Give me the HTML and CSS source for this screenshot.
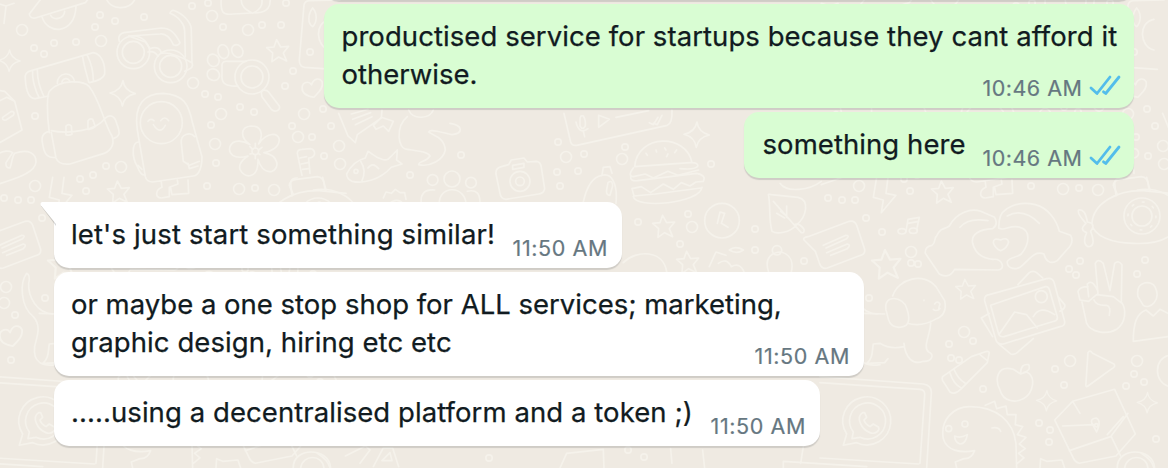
FILE: index.html
```
<!DOCTYPE html>
<html lang="en">
<head>
  <meta charset="UTF-8">
  <meta name="viewport" content="width=device-width,initial-scale=1.0">
  <title>Chat</title>
  <link rel="stylesheet" href="styles.css">
</head>
<body>
  <svg class="wallpaper" width="1168" height="468" viewBox="0 0 1168 468" aria-hidden="true">
    <defs>
      <path id="star" d="M-4-32 8-10 32-12 16 8 26 32 2 20-18 34-16 8-34-8-12-10z"/>
      <path id="spark" d="M1-38Q5-8 38 1 5 8-1 38-5 8-38-1-5-8 1-38z"/>
      <path id="heart" d="M0 28C-20 22-34 10-31-6-28-22-8-24-2-10 8-30 26-28 31-14 33 6 12 18 0 28z"/>
      <path id="dots-l" d="M22 30h.1M101 41h.1M212 16h.1M248 30h.1M221 114h.1M215 144h.1M304 114h.1M298 137h.1M239 189h.1M274 190h.1M121 167h.1M35 186h.1M339 146h.1M340 164h.1M566 157h.1M622 159h.1M692 227h.1M6 287h.1M4 303h.1M140 332h.1M87 252h.1M313 361h.1M246 361h.1M193 83h.1"/>
      <path id="dots-s" d="M34 48h.1M54 43h.1M76 42h.1M44 54h.1M95 27h.1M100 15h.1M115 21h.1M144 17h.1M192 6h.1M208 3h.1M286 3h.1M223 27h.1M262 25h.1M281 25h.1M205 94h.1M218 97h.1M240 107h.1M254 112h.1M285 86h.1M293 71h.1M310 52h.1M323 109h.1M35 116h.1M211 125h.1M216 163h.1M207 186h.1M106 166h.1M93 175h.1M80 179h.1M86 191h.1M255 188h.1M292 126h.1M312 137h.1M324 156h.1M331 126h.1M410 175h.1M461 155h.1M558 142h.1M584 154h.1M557 172h.1M578 171h.1M560 186h.1M625 147h.1M711 164h.1M638 222h.1M688 214h.1M680 244h.1M31 200h.1M18 200h.1M4 198h.1M42 218h.1M58 232h.1M87 263h.1M94 264h.1M755 229h.1M755 250h.1M804 261h.1M45 298h.1M15 315h.1M11 360h.1M135 360h.1M149 341h.1M125 344h.1M127 358h.1M245 269h.1M256 261h.1M252 275h.1M321 260h.1M313 274h.1M231 369h.1M240 385h.1M302 386h.1M310 374h.1M320 382h.1M215 423h.1M226 430h.1M225 442h.1M332 439h.1M489 458h.1M628 450h.1M644 457h.1M159 389h.1"/>
      <g id="wa">
        <path d="M-66 36A72 72 0 1 1-36 62L-76 70z"/>
        <path d="M-46 30A54 54 0 1 1-26 46L-50 50z"/>
        <path d="M-18-28C-40-14-22 22 4 32 20 38 34 26 30 16L14 6 4 14C-6 8-12 2-14-6L-6-14-12-28z"/>
      </g>
      <g id="tile">
        <!-- top left -->
        <g transform="scale(.3333)">
          <path d="M128-10 88 42Q90 56 106 54L256 8 270-10M126 50C140 104 226 106 228 18M152 46C158 62 192 58 194 34M318-6C330 30 388 34 406-4M-8 10 18 18 42 10M18 18 12 70"/>
          <use href="#spark" transform="translate(28 182) scale(.85)"/>
          <use href="#spark" x="368" y="280"/>
          <path d="M76 238Q72 216 94 212L280 158C304 162 316 190 314 222Q310 240 268 248M76 238C78 270 84 296 106 296L146 288M98 214C96 240 108 276 118 294M112 210C112 240 122 270 132 290M248 170C252 200 262 228 266 246M262 166C274 190 280 222 280 242M172 250A26 26 0 1 1 224 246M186 250A12 12 0 1 1 210 246"/>
          <path d="M148 398C140 340 140 280 150 272 180 238 250 240 268 260 300 300 312 370 336 408 346 436 330 458 300 464L210 492Q176 496 168 474L154 398M154 392C210 404 290 390 314 356M314 356C330 342 344 346 350 370 364 404 356 410 340 416M148 394C120 400 124 420 132 450 138 470 152 474 166 472M198 378v26q10 4 18-2l-2-24q-8-8-16 0zM264 362v26q10 2 22-8l-8-22q-8-4-14 4z"/>
          <path d="M-10 270 14 274 44 304 66 390-8 432M-8 306 20 292 44 304M8 352 34 334Q46 334 40 346L18 360Q6 362 8 352M-10 464C12 450 30 452 38 458L18 488Q16 504 30 504C36 490 36 468 44 460 84 446 108 458 108 486 106 520 42 536-8 554"/>
          <circle cx="400" cy="157" r="49"/><circle cx="400" cy="157" r="33"/>
          <circle cx="512" cy="199" r="49"/><circle cx="512" cy="199" r="33"/>
          <path d="M358 124C352 106 364 100 372 98L484 84C512 84 526 100 540 128Q534 140 520 134C510 112 496 100 480 102L386 108 436 126 450 146C470 138 482 146 484 160 510 154 550 174 576 188 582 202 572 206 554 214M444 156C462 152 468 160 474 168M510 40Q514 28 524 32C560 46 576 76 574 92L576 190M510 40C540 52 554 76 554 92L556 170"/>
          <path d="M436 530 412 390C400 310 436 280 490 280 550 284 566 310 578 370L606 470C606 500 598 526 580 528L458 546Q440 546 436 530zM416 426C396 424 394 470 412 500 420 520 428 526 434 524M544 430C540 400 572 396 584 410M544 430 550 484 568 496 598 484 M564 490 568 506 594 498M444 364Q452 354 462 362M482 362Q494 346 506 362M460 374Q480 406 496 376M484 546 486 562C466 570 464 594 484 594L508 590 508 562 534 552 532 540M512 564 516 584 566 580 564 540M414 496l12 12"/>
          <circle cx="484" cy="368" r="63"/>
          <circle cx="756" cy="231" r="51"/><circle cx="756" cy="231" r="33"/>
          <path d="M784 278C784 268 800 268 806 276L838 318C842 332 824 338 814 328L786 290zM714 258C680 260 664 252 666 226L666 196Q666 182 684 184L738 184"/>
          <ellipse cx="670" cy="155" rx="16" ry="21" transform="rotate(-15 670 155)"/><ellipse cx="712" cy="153" rx="16" ry="20" transform="rotate(-30 712 153)"/><ellipse cx="640" cy="181" rx="17" ry="19" transform="rotate(-30 640 181)"/><ellipse cx="640" cy="224" rx="19" ry="17" transform="rotate(30 640 224)"/>
          <use href="#star" x="834" y="151"/>
          <path d="M664-8C660 40 670 46 700 42L774 38Q816 34 810-8M724-8C720 20 740 30 758 40 780 30 792 16 784-8"/>
          <path d="M750 434C718 410 722 380 754 378 790 378 788 412 776 432 800 396 836 396 838 420 836 446 806 456 792 458 840 468 838 506 816 514 790 520 778 492 774 478 776 540 732 536 720 508 714 488 734 476 744 468 700 480 684 460 690 440 700 414 734 424 750 434z"/>
          <path d="M766 430v14M750 440l8 8M786 442l-10 8M750 462l8-2M780 464l-6-4M766 476v-10"/><circle cx="766" cy="454" r="10"/>
          <path d="M912 16Q914 2 930 2L1020 0M912 16 898 180Q898 200 914 202L1000 208M938 24C954 42 950 70 938 80 922 70 924 42 938 24zM990 58C942 66 946 140 990 150"/>
          <use href="#heart" transform="translate(938 264) rotate(-8)"/>
          <path d="M906 526 892 460Q892 448 906 448L932 446Q944 448 944 462 940 474 926 474L930 520M900 474l20-4M904 492l20-4M908 508l18-2M880 584 868 556Q870 540 890 538L952 530Q970 532 972 550L976 572"/>
        </g>
        <!-- top middle -->
        <g transform="translate(320) scale(.3333)">
          <path d="M56 340 84 408 106 428 112 404 184 354 186 330M94 342l50-14M98 358l54-20M106 374l50-24M160 376 184 352 220 364 206 394 190 378 168 388zM266 330C280 362 330 356 340 330M262 350C226 380 232 448 262 448 300 454 324 456 330 468 320 486 296 482 296 494 330 502 370 480 376 450 372 410 340 408 326 396 330 386 360 396 396 404 430 400 430 376 390 370 384 330M360 376C380 372 392 384 396 404M384 330C410 380 480 376 506 388 560 410 556 440 540 464 500 460 480 494 450 490 450 476 480 482 510 458 520 430 520 404 500 400M560 330C560 376 580 390 600 402L628 400 656 356Q696 336 698 356C690 400 640 450 556 446"/>
          <path d="M732 340 752 426Q756 438 770 436L1042 376Q1058 370 1056 330M780 360Q780 344 790 348 798 360 796 378 788 392 780 378zM768 366Q778 406 804 386M790 394l4 16M836 346v36l32-24zM888 352 986 332M988 368l12 6 14-22M1000 370l12 4 14-28"/>
          <use href="#spark" x="1130" y="404"/>
          <path d="M80 522C96 490 120 478 136 474L144 454 168 470C190 480 196 482 204 478L232 450 230 480 246 492 214 502C180 540 130 552 96 544Q80 536 80 522zM122 484Q140 512 126 542M144 504Q158 484 176 506"/><circle cx="108" cy="514" r="6"/>
          <path d="M528 522Q526 504 544 500L566 494 574 480 612 474 622 486 650 484Q662 486 664 502L674 566Q672 580 656 582L558 598Q542 596 540 580zM578 496l34-6v12l-34 6z"/><circle cx="600" cy="544" r="30"/><circle cx="600" cy="544" r="13"/>
          <circle cx="338" cy="540" r="16"/><circle cx="396" cy="537" r="24"/><circle cx="453" cy="548" r="16"/>
          <path d="M304 612Q298 566 344 570M358 618C352 550 442 556 438 618M442 574Q482 564 480 612M-20 570C40 560 96 590 108 625M190 594l8-18 16 4 12-12 14 10 14 0 4 20M206 620A24 24 0 0 1 248 610M790 606C800 560 820 530 846 526 874 518 894 550 888 610M846 526 850 502 870 500 876 520M864 548q14-10 14 10l-8 28q-12 0-10-16z"/>
          <path d="M944 500C952 400 1100 400 1116 488M944 500 1110 488Q1134 486 1134 498 1128 510 1080 506M940 504Q922 528 940 530L976 522 1000 534 1044 514 1074 526 1136 510M932 530Q930 544 952 542L1130 520Q1160 526 1150 544L1128 546 1110 558 1084 548 1060 568 1030 552 992 578 964 560 936 566 942 588 1006 582 1142 564M940 590C948 628 1140 610 1146 562M978 460l4 6M1008 450l2 6M1034 444l4 6M1070 450l-6 8M1044 462l-4 8"/>
        </g>
        <!-- left edge -->
        <g transform="translate(0 190) scale(.3333)">
          <path d="M80 250C58 280 62 350 100 380 126 410 110 440 104 470 98 520 130 530 168 524M80 250Q92 256 86 280C84 320 110 370 160 372"/>
          <use href="#heart" transform="translate(34 438) rotate(-8) scale(1.1)"/>
        </g>
        <!-- centre and bottom middle -->
        <g transform="translate(320 170) scale(.3333)">
          <use href="#star" x="1032" y="168"/><use href="#star" x="1104" y="276"/>
          <path d="M910 278C950 238 1030 240 1040 305M1168 290l20-44 30 10M76 858 136 828 150 840 120 880M160 890 190 834 218 834 236 890M186 872 210 848 216 872zM720 894 740 850 850 838 852 894M-8 850Q24 870 30 894M1052 836 1056 880M1148 840 1154 894"/>
        </g>
        <!-- right side, wraps round to the left edge -->
        <g transform="translate(-104 180) scale(.3333)">
          <path d="M470-8 460 52 490 60 484 98 528 46 498 40 504-8M180 10C200 40 270 30 304 4M146 48Q142 40 154 44L234 52C270 60 260 110 230 134 210 158 170 164 156 154 146 120 152 88 146 48zM160 64 222 134Q238 128 252 148 254 160 244 158L222 134M200 78v34M182 94l18 14M170 100l24 14"/>
          <use href="#star" x="668" y="35"/><use href="#star" transform="translate(500 252) scale(1.3)"/><use href="#star" transform="translate(738 327) scale(.9)"/>
          <path d="M252 180Q248 172 264 170L388 124Q404 120 410 136L434 208Q436 222 422 226L322 264Q306 268 300 254L286 214zM310 196l68-30q12 0 2 10l-62 28M320 218l62-26q12 2 0 14l-50 20M558 154 564 118 598 112 590 150M564 130l32-6"/>
          <ellipse cx="546" cy="154" rx="12" ry="8"/><ellipse cx="580" cy="152" rx="12" ry="8"/>
          <path d="M688 138C710 96 754 84 782 94L824 112Q836 134 818 146C780 148 752 162 758 190 766 222 790 236 820 238 850 236 856 270 834 270L704 268C692 290 674 292 658 282L616 220Q614 200 636 196C650 186 640 176 650 168 664 140 672 150 688 138zM720 142Q744 112 804 122M838 122C842 80 900 62 946 74 984 84 1010 120 1018 154L1052 166Q1064 188 1040 210L1012 242C990 256 976 240 972 222 940 210 926 244 900 262 880 272 860 262 862 244 870 230 890 234 904 222 930 190 932 150 900 142 872 132 850 156 836 144zM862 108Q910 82 958 130M820 188Q820 172 842 180 862 170 866 186 862 204 842 212 826 206 820 188z"/>
          <path d="M1116 130C1120 70 1190 30 1270 32L1350 40M1116 130C1120 170 1180 190 1240 190 1300 194 1340 176 1360 160M1188 48 1184 8Q1186-6 1204-6M1280-8 1290 30M1098 130Q1070 100 1076 90 1096 86 1102 126 1130 130 1112 154 1130 200 1104 200 1086 190 1100 158 1076 150 1098 130"/>
          <circle cx="1266" cy="108" r="54"/><circle cx="1266" cy="108" r="30"/><circle cx="1266" cy="108" r="42" stroke-dasharray="5 28"/>
          <path d="M430 400 494 402M498 390C490 340 550 350 560 384 576 430 560 442 536 442 500 438 506 410 498 390zM518 348C536 294 612 276 648 320L674 362C680 390 670 408 650 416 620 434 590 438 562 430M632 424C634 460 606 500 626 516 646 524 634 546 610 544 580 556 556 534 552 490M552 500C520 508 496 500 480 490L460 492C456 510 460 536 440 550L494 548 504 536M612 360v2M644 372q8-12 16 0-4 10-4 18M640 388q8 8 20-2"/>
          <path d="M794 362Q792 346 808 344L980 296Q996 292 1002 306L1034 424Q1036 438 1020 440L850 492Q832 494 828 480zM812 376 976 320Q984 318 988 328L1012 410Q1014 422 1002 424L852 470Q840 472 836 462zM894 314 928 278Q940 270 950 278L968 294M1014 350 1034 374Q1038 384 1020 394M808 400 784 414 818 470M836 492 872 522Q884 526 894 516L940 476M838 462 884 396 920 404 952 444M940 410Q960 374 1004 404"/><circle cx="964" cy="350" r="18"/>
          <path d="M1086 366 1100 430C1112 456 1160 466 1190 448 1216 430 1222 390 1204 366L1206 254Q1196 240 1184 250L1170 332 1150 250Q1134 234 1126 250L1134 340M1132 330Q1116 296 1102 312L1106 350M1104 320Q1080 320 1074 334L1080 360 1106 364 1130 344 1180 350 1206 370M1122 360Q1130 378 1160 376 1174 380 1168 406"/>
          <path d="M1254 350C1246 300 1296 300 1306 322 1324 360 1290 390 1270 376zM1240 484C1240 430 1250 400 1278 390L1300 408 1320 388 1344 400M1240 484 1344 470M1104 518Q1110 508 1118 520L1182 552Q1188 560 1176 566L1104 618Q1096 624 1098 610zM1350 526C1300 532 1300 610 1350 620"/>
          <path d="M668 590Q664 600 672 608L690 636Q706 646 722 628L802 548 808 518Q806 512 794 516L754 530zM690 578q10 34 34 46M702 568q12 30 34 42M780 524l22 18M880 568C830 554 824 600 840 630 850 668 890 668 910 656 940 640 950 590 920 576L902 582 880 568M902 580Q902 550 926 554 934 572 910 578"/>
          <path d="M300 590 610 612Q636 616 634 640L620 864M300 608 600 628Q616 630 614 646L600 850M300 834 596 852M250 800 242 850M190 864V844L440 860"/>
          <use href="#wa" x="446" y="726"/>
          <path d="M670 776C660 720 700 680 750 680 830 680 880 724 888 790L890 864M670 776C680 812 720 820 764 812Q754 838 732 836L706 846 710 864M796 676 824 664 830 686 858 678 862 704 888 704 886 734 908 740 892 764 918 772 898 792 916 806 896 820 912 834 892 850M704 768Q720 776 742 764 738 792 720 792 704 786 704 768zM816 744q20-4 26 10"/><circle cx="686" cy="746" r="9"/><circle cx="735" cy="732" r="9"/>
          <use href="#spark" transform="translate(980 662) scale(.8)"/><use href="#spark" transform="translate(1282 668) scale(.8)"/>
          <path d="M1004 720 1058 664 1184 628 1246 762 1188 828 1078 850Q1064 846 1058 830zM1058 664 1080 700M1028 738 1120 734M1048 812 1172 770 1224 700M1174 770 1202 828M1162 764 1210 710M1116 730Q1110 716 1128 714 1146 720 1130 756z"/><circle cx="1129" cy="736" r="5"/>
          <path d="M1192 864C1190 800 1300 800 1304 864M1214 864C1220 822 1280 822 1284 864M960 864 962 836 980 844 1026 840 1034 864"/>
        </g>
        <!-- left part of the same row, at the far end of the tile -->
        <g transform="translate(720 180) scale(.3333)">
          <circle cx="6" cy="122" r="52"/><path d="M-8 130 0 96 14 100 4 130 24 142M28 210Q46 196 70 210 50 224 28 210zM-5 250Q20 232 34 260 60 246 72 276M146 276C130 230 160 216 184 216 214 224 220 250 214 276"/><circle cx="171" cy="211" r="14"/>
        </g>
        <!-- loose rings: a thick dot with the wall colour over its middle -->
        <use href="#dots-l" class="ring-l"/><use href="#dots-l" class="hole-l"/>
        <use href="#dots-s" class="ring-s"/><use href="#dots-s" class="hole-s"/>
      </g>
    </defs>
    <use href="#tile" x="-824"/>
    <use href="#tile"/>
    <use href="#tile" x="824"/>
  </svg>

  <svg class="sprite" aria-hidden="true">
    <symbol id="read" viewBox="0 0 32 22">
      <path d="M2 13 8 18.500 21 2M14.500 16.800 16.700 18.500 30 2"/>
    </symbol>
  </svg>

  <main class="chat">
    <div class="bubble out prev"></div>
    <div class="bubble out long">
      <p class="text"><span class="wide">productised service for startups because they cant afford it</span><br>otherwise.</p>
      <div class="meta"><span class="time">10:46 AM</span><svg class="ticks"><use href="#read"/></svg></div>
    </div>
    <div class="bubble out short">
      <p class="text wide">something here</p>
      <div class="meta"><span class="time">10:46 AM</span><svg class="ticks"><use href="#read"/></svg></div>
    </div>

    <div class="bubble in first">
      <svg class="tail" width="16" height="26" viewBox="0 0 16 26"><path class="tail-shadow" d="M3 3 16 20v4L1 4z"/><path d="M16 0H2.500Q-.5.500 1 3.500L16 22z"/></svg>
      <p class="text wider">let's just start something similar!</p>
      <div class="meta"><span class="time">11:50 AM</span></div>
    </div>
    <div class="bubble in long">
      <p class="text">or maybe a one stop shop for ALL services; marketing,<br><span class="wide">graphic design, hiring etc etc</span></p>
      <div class="meta"><span class="time">11:50 AM</span></div>
    </div>
    <div class="bubble in last">
      <p class="text wide">.....using a decentralised platform and a token ;)</p>
      <div class="meta"><span class="time">11:50 AM</span></div>
    </div>
  </main>
</body>
</html>
```

FILE: styles.css
```
html,body,p{margin:0;padding:0;}
body{
  position: relative;
  width: 1168px;
  height: 468px;
  overflow: hidden;
  background: #efeae2;
  color: #111b21;
  font-family: Inter, "Liberation Sans", sans-serif;
}
.wallpaper{
  position: absolute;
  top: 0;
  left: 0;
  fill: none;
  stroke: #f5f2eb;
  stroke-width: 5;
  stroke-linecap: round;
  stroke-linejoin: round;
}
.ring-l{
  stroke-width: 12.500;
}
.hole-l{
  stroke: #efeae2;
  stroke-width: 9.300;
}
.ring-s{
  stroke-width: 8;
}
.hole-s{
  stroke: #efeae2;
  stroke-width: 4.600;
}
.sprite{
  display: none;
}
.chat{
  position: relative;
  display: flex;
  flex-direction: column;
  gap: 4px;
  padding: 0 34.500px 0 54px;
}
.bubble{
  position: relative;
  box-sizing: border-box;
  display: flex;
  justify-content: space-between;
  align-items: flex-end;
  padding: 13px 14px 15px 18px;
  border-radius: 15px;
  box-shadow: 0 2px 1px rgba(11,20,26,.14);
}
.out{
  align-self: flex-end;
  padding-right: 13px;
  background: #d9fdd3;
}
.in{
  align-self: flex-start;
  padding-left: 17px;
  background: #fff;
}
.prev{
  width: 810px;
  height: 30px;
  margin-top: -30px;
}
.long{
  flex-direction: column;
  align-items: stretch;
  width: 810px;
  height: 104px;
}
.short{
  width: 390px;
  padding-left: 19px;
}
.first{
  width: 568px;
  margin-top: 20px;
  border-top-left-radius: 0;
}
.last{
  width: 766px;
}
.text{
  font-size: 27.500px;
  font-weight: 430;
  line-height: 38px;
  white-space: nowrap;
  -webkit-text-stroke: .25px #111b21;
}
.wide{
  letter-spacing: .07px;
}
.wider{
  letter-spacing: .14px;
}
.meta{
  display: flex;
  align-items: center;
  align-self: flex-end;
  height: 30px;
  margin-bottom: -10px;
  font-size: 21.500px;
  line-height: 30px;
  color: #667781;
  white-space: nowrap;
  -webkit-text-stroke: .2px #667781;
}
.time{
  letter-spacing: .6px;
}
.out .time{
  margin-right: -1px;
  letter-spacing: .5px;
}
.long .meta{
  margin-top: -20px;
}
.ticks{
  width: 32px;
  height: 22px;
  margin: -5px 0 0 7px;
  fill: none;
  stroke: #53bdeb;
  stroke-width: 2.800;
  stroke-linecap: round;
  stroke-linejoin: round;
}
.tail{
  position: absolute;
  top: 0;
  left: -14px;
  fill: #fff;
}
.tail-shadow{
  fill: rgba(11,20,26,.16);
}
```
